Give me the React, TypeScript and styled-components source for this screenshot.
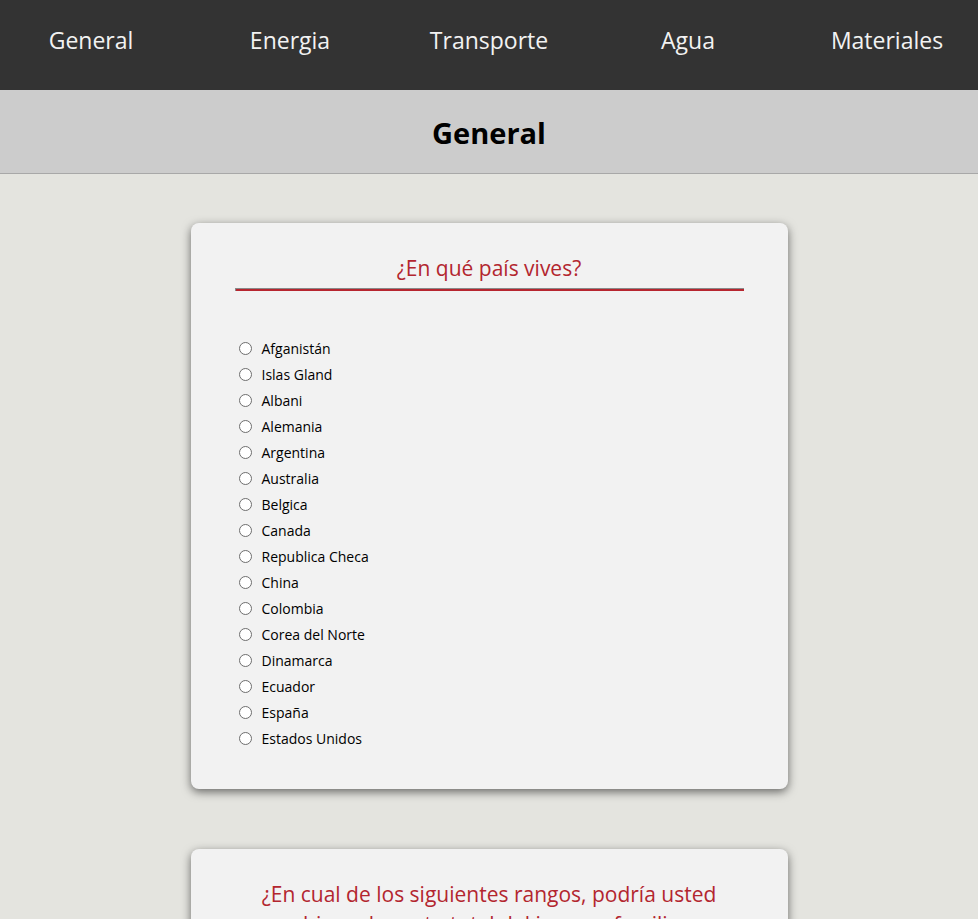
import React from "react";
import styled, { createGlobalStyle } from "styled-components";

const Global = createGlobalStyle`
  html, body { margin: 0; padding: 0; }
  body {
    background: #e4e4df;
    font-family: "Open Sans", "Noto Sans", sans-serif;
    overflow: hidden;
  }
`;

const Nav = styled.nav`
  background: #333333;
  height: 90px;
  display: grid;
  grid-template-columns: repeat(5, 199px);
  justify-content: center;
  align-items: center;
  overflow: hidden;
`;

const NavItem = styled.a`
  color: #f2f2f2;
  font-size: 23px;
  text-align: center;
  text-decoration: none;
  line-height: 1;
  padding-bottom: 10px;
`;

const TitleBar = styled.header`
  background: #cccccc;
  height: 83px;
  border-bottom: 1px solid #a8a8a8;
  display: flex;
  align-items: center;
  justify-content: center;
`;

const Title = styled.h1`
  margin: 0;
  font-size: 29px;
  font-weight: 700;
  color: #000;
  padding-top: 2px;
`;

const Main = styled.main`
  display: flex;
  flex-direction: column;
  align-items: center;
  gap: 60px;
  padding-top: 49px;
`;

const Card = styled.section`
  width: 597px;
  box-sizing: border-box;
  background: #f2f2f2;
  border-radius: 8px;
  box-shadow: 0 3px 10px rgba(0, 0, 0, 0.55);
  padding: 30px 44px 38px;
`;

const Question = styled.h2`
  margin: 0;
  text-align: center;
  font-size: 21px;
  font-weight: 400;
  color: #b3262f;
  line-height: 30px;
  padding: 0 18px;
`;

const Rule = styled.hr`
  margin: 5px 0 44px;
  height: 2px;
  background: #b7262f;
  border: none;
  border-top: 1px solid #8a8a8a;
  border-left: 1px solid #8a8a8a;
`;

const Options = styled.div`
  display: flex;
  flex-direction: column;
`;

const Option = styled.label`
  display: flex;
  align-items: center;
  height: 26px;
  font-size: 14px;
  color: #000;
`;

const Radio = styled.input`
  appearance: none;
  box-sizing: border-box;
  width: 13px;
  height: 13px;
  margin: 0 10px 0 4px;
  border: 1.3px solid #6e6e6e;
  border-radius: 50%;
  background: #fff;
`;

const countries = [
  "Afganistán",
  "Islas Gland",
  "Albani",
  "Alemania",
  "Argentina",
  "Australia",
  "Belgica",
  "Canada",
  "Republica Checa",
  "China",
  "Colombia",
  "Corea del Norte",
  "Dinamarca",
  "Ecuador",
  "España",
  "Estados Unidos",
];

const navItems = ["General", "Energia", "Transporte", "Agua", "Materiales"];

export default function App() {
  return (
    <>
      <Global />
      <Nav>
        {navItems.map((n) => (
          <NavItem key={n} href="#">
            {n}
          </NavItem>
        ))}
      </Nav>
      <TitleBar>
        <Title>General</Title>
      </TitleBar>
      <Main>
        <Card>
          <Question>¿En qué país vives?</Question>
          <Rule />
          <Options>
            {countries.map((c) => (
              <Option key={c}>
                <Radio type="radio" name="pais" />
                {c}
              </Option>
            ))}
          </Options>
        </Card>
        <Card>
          <Question>
            ¿En cual de los siguientes rangos, podría usted ubicar el monto total del ingreso familiar mensual?
          </Question>
          <Rule />
        </Card>
      </Main>
    </>
  );
}
